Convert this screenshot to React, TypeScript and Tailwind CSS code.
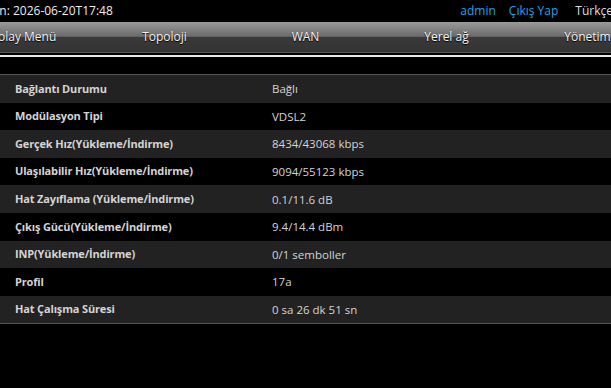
export default function App() {
  const rows: [string, string][] = [
    ["Bağlantı Durumu", "Bağlı"],
    ["Modülasyon Tipi", "VDSL2"],
    ["Gerçek Hız(Yükleme/İndirme)", "8434/43068 kbps"],
    ["Ulaşılabilir Hız(Yükleme/İndirme)", "9094/55123 kbps"],
    ["Hat Zayıflama (Yükleme/İndirme)", "0.1/11.6 dB"],
    ["Çıkış Gücü(Yükleme/İndirme)", "9.4/14.4 dBm"],
    ["INP(Yükleme/İndirme)", "0/1 semboller"],
    ["Profil", "17a"],
    ["Hat Çalışma Süresi", "0 sa 26 dk 51 sn"],
  ];
  const menu = ["Kolay Menü", "Topoloji", "WAN", "Yerel ağ", "Yönetim"];

  return (
    <div
      className="w-[611px] h-[388px] overflow-hidden bg-black text-[#ddd]"
      style={{ fontFamily: '"Open Sans", "Noto Sans", sans-serif' }}
    >
      <div className="h-[22px] flex items-center text-[12px] whitespace-nowrap">
        <span className="-ml-[32px] text-[#eee]">Zaman: 2026-06-20T17:48</span>
        <div className="ml-auto flex gap-[13px] -mr-[2px] text-[#1ca4ec]">
          <span>admin</span>
          <span className="mr-[4px]">Çıkış Yap</span>
          <span className="text-[#ddd]">Türkçe</span>
        </div>
      </div>

      <div className="h-[31px] flex -ml-[47px] bg-[linear-gradient(to_bottom,#9a9a9a_0%,#6a6a6a_48%,#3a3a3a_50%,#333_100%)] border-b border-[#555]">
        {menu.map((m) => (
          <div
            key={m}
            className="w-[141px] shrink-0 flex items-center justify-center text-[12px] text-[#f2f2f2] [text-shadow:0_1px_1px_#000]"
          >
            {m}
          </div>
        ))}
      </div>
      <div className="h-[2px]" />
      <div className="h-[2px] bg-[#e8e8e8]" />

      <div className="mt-[17px] border-t border-[#555] border-b">
        {rows.map(([k, v], i) => (
          <div
            key={k}
            className={`flex items-center h-[27.6px] ${i % 2 === 0 ? "bg-[#222]" : "bg-black"}`}
          >
            <div className="w-[272px] pl-[15px] text-[11px] tracking-[-0.15px] font-bold text-[#d4d4d4]">{k}</div>
            <div className="text-[11.5px] text-[#d4d4d4]">{v}</div>
          </div>
        ))}
      </div>
    </div>
  );
}
